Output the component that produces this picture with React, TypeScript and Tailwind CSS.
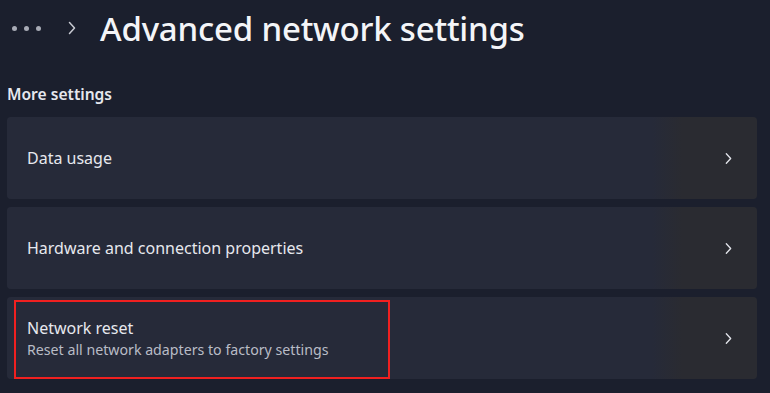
import React from "react";

const Chevron = ({ className = "" }: { className?: string }) => (
  <svg viewBox="0 0 8 14" className={className} fill="none" stroke="currentColor" strokeWidth="1.5" strokeLinecap="round" strokeLinejoin="round">
    <path d="M1.5 1.5 L6.5 7 L1.5 12.5" />
  </svg>
);

function Card({ title, subtitle, highlight }: { title: string; subtitle?: string; highlight?: boolean }) {
  return (
    <div className="relative h-[82px] rounded-[4px] bg-[linear-gradient(90deg,#262a39_0%,#262a39_86%,#2a2b31_90%,#2a2b31_100%)] flex items-center pl-[20px] pr-[25px]">
      <div className="flex-1 flex flex-col">
        <div className="text-[16px] leading-[20px] text-[#e6e8ee]">{title}</div>
        {subtitle && <div className="text-[14.2px] leading-[18px] text-[#b9bcc6] mt-[3px]">{subtitle}</div>}
      </div>
      <Chevron className="w-[7px] h-[13px] text-[#e0e2e8]" />
      {highlight && (
        <div className="absolute left-[7px] top-[3px] w-[376px] h-[79px] border-[2.5px] border-[#f02020]" />
      )}
    </div>
  );
}

export default function App() {
  return (
    <div className="w-[770px] h-[393px] overflow-hidden bg-[#1b1f2d] text-white" style={{ fontFamily: '"Noto Sans", "Open Sans", sans-serif' }}>
      <div className="flex items-center h-[56px] pl-[12px]">
        <div className="flex gap-[7px] items-center">
          <span className="w-[5px] h-[5px] rounded-full bg-[#a8abb5]" />
          <span className="w-[5px] h-[5px] rounded-full bg-[#a8abb5]" />
          <span className="w-[5px] h-[5px] rounded-full bg-[#a8abb5]" />
        </div>
        <Chevron className="ml-[27px] w-[8px] h-[14px] text-[#c8cad2]" />
        <h1 className="ml-[24px] text-[33px] font-medium leading-none text-[#f4f5f8] tracking-[-0.2px]">Advanced network settings</h1>
      </div>
      <div className="pl-[7px] mt-[28px] text-[15.6px] font-semibold text-[#e6e8ee] leading-[20px]">More settings</div>
      <div className="mt-[13px] ml-[7px] mr-[13px] flex flex-col gap-[8px]">
        <Card title="Data usage" />
        <Card title="Hardware and connection properties" />
        <Card title="Network reset" subtitle="Reset all network adapters to factory settings" highlight />
      </div>
    </div>
  );
}
